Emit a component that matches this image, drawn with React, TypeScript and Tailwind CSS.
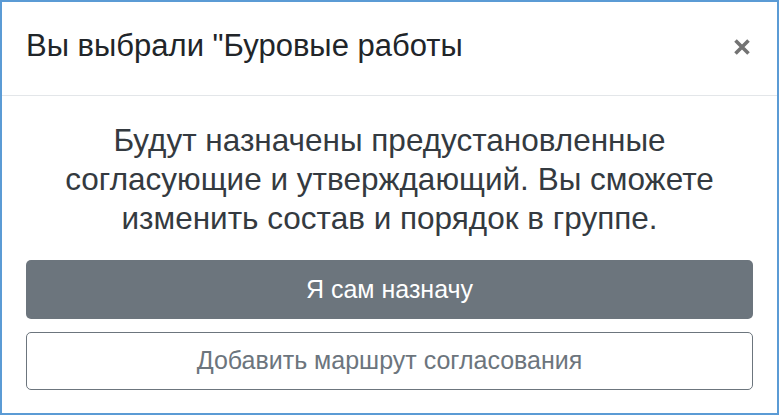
import React from "react";

export default function App() {
  return (
    <div className="w-[779px] h-[415px] border-2 border-[#5b9bd5] bg-white font-['Liberation_Sans',Arial,sans-serif] text-[#212529] flex flex-col">
      <div className="h-[94px] shrink-0 border-b border-[#e3e6e9] flex items-center justify-between pl-[24px] pr-[26px] pb-[6px]">
        <div className="text-[31px] leading-[36px]">Вы выбрали "Буровые работы</div>
        <svg width="18" height="18" viewBox="0 0 18 18" className="mt-[2px]">
          <path d="M2.5 2.5 L15.5 15.5 M15.5 2.5 L2.5 15.5" stroke="#737373" strokeWidth="3.6" strokeLinecap="butt" />
        </svg>
      </div>
      <div className="px-[24px] pt-[25px] flex flex-col">
        <p className="text-[31.5px] leading-[39px] text-center text-[#343a40]">
          Будут назначены предустановленные
          <br />
          согласующие и утверждающий. Вы сможете
          <br />
          изменить состав и порядок в группе.
        </p>
        <button className="mt-[22px] h-[59px] w-full rounded-[5px] bg-[#6c757d] text-white text-[25px]">
          Я сам назначу
        </button>
        <button className="mt-[13px] h-[58px] w-full rounded-[5px] border border-[#6c757d] bg-white text-[#6c757d] text-[25px]">
          Добавить маршрут согласования
        </button>
      </div>
    </div>
  );
}
